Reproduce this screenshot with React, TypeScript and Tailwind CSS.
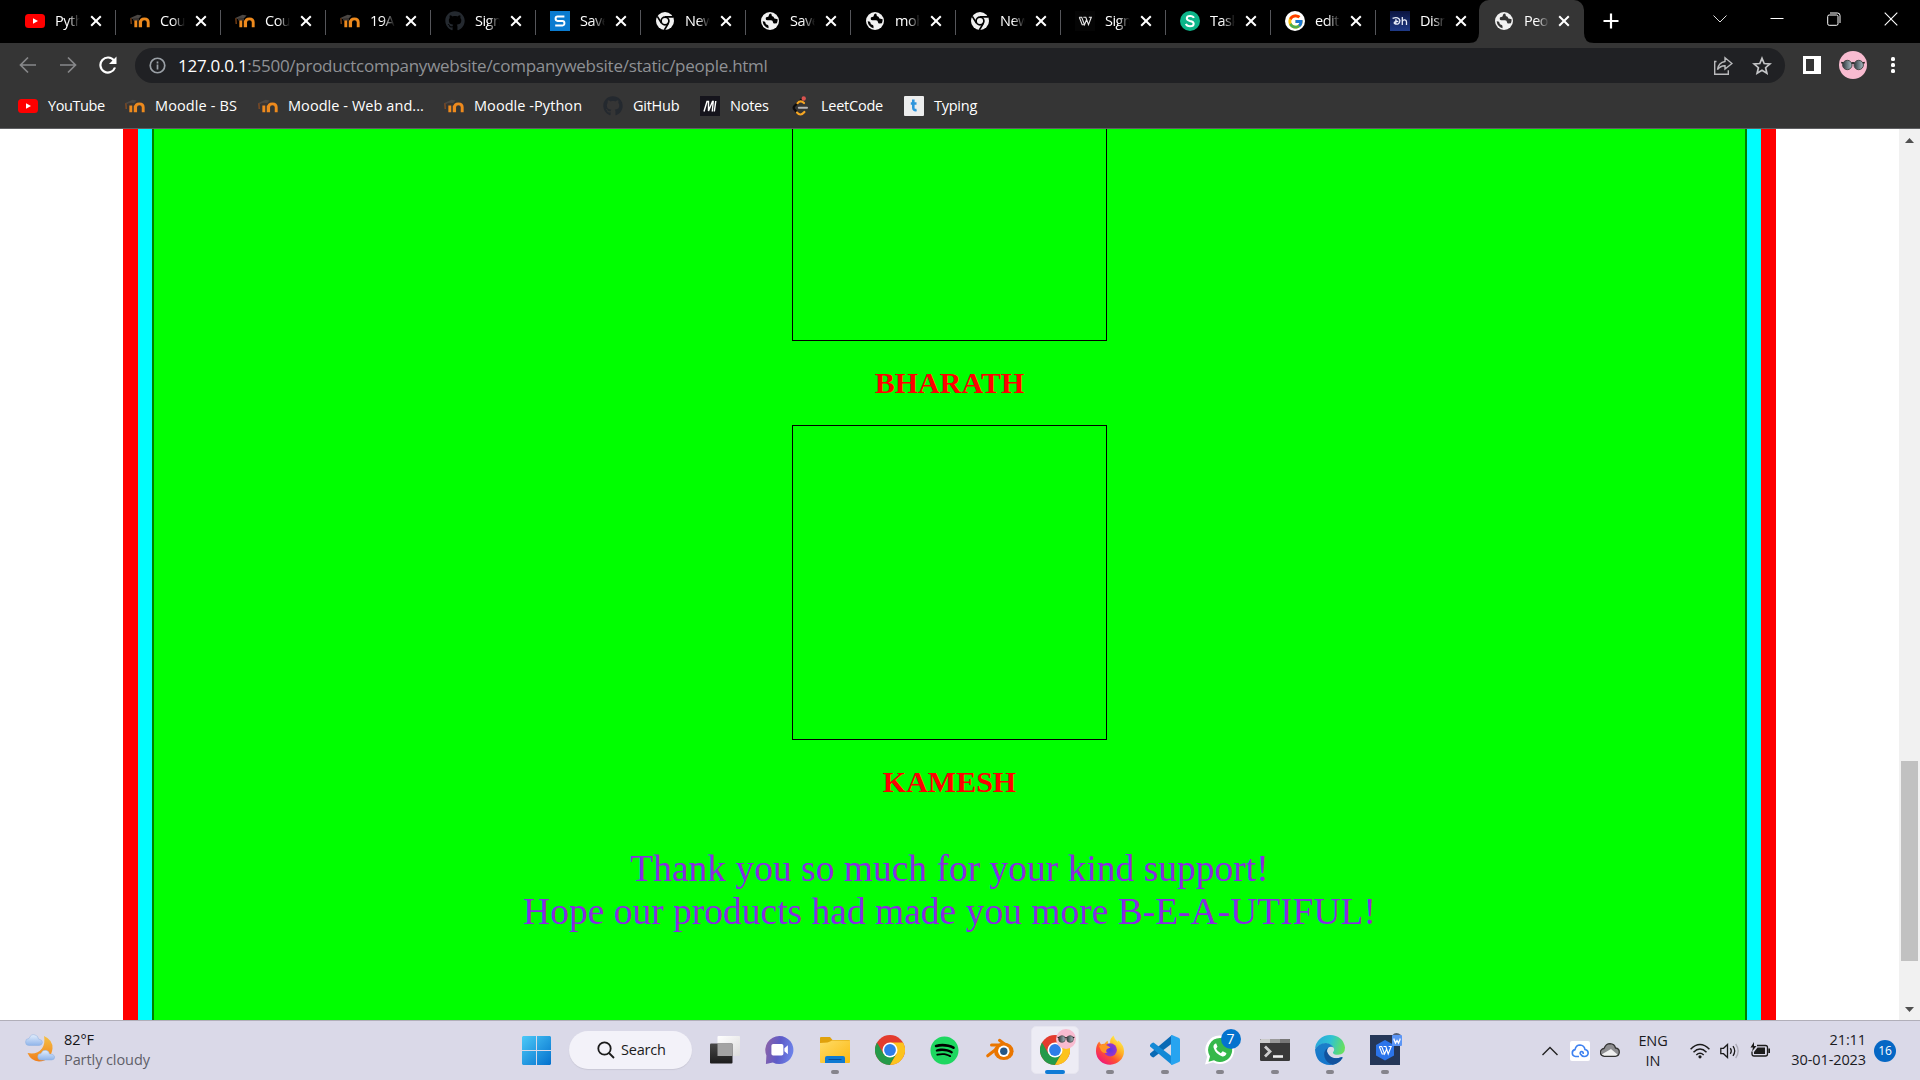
import React, { type ReactNode } from "react";
import { FaGithub, FaSpotify } from "react-icons/fa";
import { FcGoogle } from "react-icons/fc";

/* ---------- small favicons ---------- */

const YouTube = () => (
  <svg viewBox="0 0 20 20" className="size-5">
    <rect x="0" y="3" width="20" height="14" rx="3.5" fill="#f00" />
    <path d="M8 7.2v5.600l5-2.800z" fill="#fff" />
  </svg>
);

const Moodle = () => (
  <svg viewBox="0 0 20 20" className="size-5">
    <path d="M5.800 16.300V8.400M10.200 16.300V9.500M10.600 16.300v-5.100q0-3.300 3.800-3.300t3.800 3.300v5.100" fill="none" stroke="#ee8a1d" strokeWidth="2.900" />
    <path d="M.3 7 7.600 3.700l4 .9L9 7.300 2.600 8z" fill="#4b4744" />
    <path d="M3 7.400q3-1.200 6-.2v2.200H3z" fill="#3a3532" />
    <path d="M.9 7.200 1.200 13" stroke="#a3551b" strokeWidth="1" />
  </svg>
);

const GitHub = () => <FaGithub className="size-5 text-[#24292f]" />;

const SBlue = () => (
  <svg viewBox="0 0 20 20" className="size-5">
    <rect width="20" height="20" fill="#0a7bd0" />
    <path d="M14.400 5.400H7.600q-2 0-2 2.200t2 2.300h4.800q2 0 2 2.300t-2 2.200H5.200" fill="none" stroke="#fff" strokeWidth="2" />
  </svg>
);

const ChromeMono = () => (
  <svg viewBox="0 0 20 20" className="size-5">
    <circle cx="10" cy="10" r="9" fill="#f1f1f1" />
    <circle cx="10" cy="10" r="3.900" fill="none" stroke="#000" strokeWidth="1.700" />
    <path d="M10 5.900h8.200M6.400 12 2.300 5.300M13.500 12 9.400 19" stroke="#000" strokeWidth="1.600" />
  </svg>
);

const Globe = ({ hole = "#000" }: { hole?: string }) => (
  <svg viewBox="0 0 20 20" className="size-5">
    <circle cx="10" cy="10" r="9" fill="#f1f1f1" />
    <path d="M11 2.600q-2 .2-2.200 1.900-.1 1.500-1.800 1.500-1.500.1-1.300 2 .2 1.300 2 1.200h3.300q1.900.2 2 2 0 1.400 1.600 1.300l2.300-.3q.9-1.700.7-4l-2-.4q-1.600 0-1.700-1.200-.1-1.200-1.500-1.300-1-.2-.6-1.300zM2.700 10.200q.4 5.200 5.800 7v-2q-.1-1.200-1.300-1.400-1.600-.3-1.700-1.900-.1-1.300-1.200-1.500z" fill={hole} />
  </svg>
);

const WMono = () => (
  <svg viewBox="0 0 20 20" className="size-5" fill="none" stroke="#e8e8e8" strokeWidth="1.100">
    <rect width="20" height="20" fill="#050505" stroke="none" />
    <path d="M4.300 6.300h2.400l2.800 7.400 2-5M4.300 6.300l2.900 7.400h2.300M8.300 6.300h2.500l2.700 7.400 2.800-7.400h-2.500" />
  </svg>
);

const SGreen = () => (
  <svg viewBox="0 0 20 20" className="size-5">
    <circle cx="10" cy="10" r="10" fill="#0db58a" />
    <path d="M13.900 6.900q-.8-2-3.800-2-3.300 0-3.300 2.400 0 1.900 3.200 2.600 3.700.7 3.700 2.800 0 2.500-3.700 2.500-3.300 0-4.100-2.300" fill="none" stroke="#fff" strokeWidth="2" />
  </svg>
);

const Google = () => (
  <span className="flex size-5 items-center justify-center rounded-full bg-white">
    <FcGoogle className="size-[17px]" />
  </span>
);

const DisneyHotstar = () => (
  <svg viewBox="0 0 20 20" className="size-5">
    <defs>
      <linearGradient id="dh" x2="0" y2="1">
        <stop stopColor="#0b1440" />
        <stop offset="1" stopColor="#1f3a86" />
      </linearGradient>
    </defs>
    <rect width="20" height="20" fill="url(#dh)" />
    <path d="M2.600 7.300q6-2 7.300 2.200-.2 4-4.200 3.700-2-.7-1.300-2 1.400-1.200 4-.7M5.900 8.300v5M12.300 6v8M12.300 10.500q.6-1.900 2.600-1.600 1.600.3 1.600 2V14" fill="none" stroke="#e8ecf8" strokeWidth="1.300" />
  </svg>
);

const NotesM = () => (
  <svg viewBox="0 0 20 20" className="size-5">
    <rect width="20" height="20" fill="#15141c" />
    <path d="M4 15.500 7 5.500h1.500v9.500l4-9.500h.7l-.9 10M15.800 5l-1.500 10.500" fill="none" stroke="#fff" strokeWidth="1.400" />
  </svg>
);

const LeetCode = () => (
  <svg viewBox="0 0 20 20" className="size-5" fill="none" strokeLinecap="round">
    <path d="M11.500 2.500 3.500 10q-1.700 1.800 0 3.600L6.500 17" stroke="#0c0c0c" strokeWidth="2.200" />
    <path d="M6.500 7.200q3-3.500 6.500-.2M6 16.500q3.400 4.200 7.400-.5" stroke="#f5a623" strokeWidth="2.200" />
    <path d="M7.800 11.700h8.200" stroke="#b5b5b5" strokeWidth="2" />
    <circle cx="12.700" cy="2.500" r="2.200" fill="#d9534f" />
  </svg>
);

const TypingT = () => (
  <svg viewBox="0 0 20 20" className="size-5">
    <rect width="20" height="20" rx="1" fill="#eceded" />
    <path d="M9.300 3.500v8.300q0 2.800 3.300 2.200M6.800 7.500h5.700" fill="none" stroke="#2f95dc" strokeWidth="2.600" />
  </svg>
);

const Glasses = ({ className }: { className: string }) => (
  <svg viewBox="0 0 28 28" className={className}>
    <defs>
      <linearGradient id="lens">
        <stop stopColor="#30383d" />
        <stop offset="1" stopColor="#a9bcc4" />
      </linearGradient>
    </defs>
    <circle cx="14" cy="14" r="14" fill="#f8bbd0" />
    <circle cx="8.300" cy="14" r="4.700" fill="url(#lens)" stroke="#4a4a4a" />
    <circle cx="19.700" cy="14" r="4.700" fill="url(#lens)" stroke="#4a4a4a" />
    <path d="M2.200 11.500l2 .5M25.800 11.500l-2 .5M12.500 12.500q1.500-1.200 3 0" stroke="#222" strokeWidth="1.600" fill="none" />
  </svg>
);

const CloseX = () => (
  <svg viewBox="0 0 12 12" className="size-3 shrink-0" stroke="#fff" strokeWidth="2">
    <path d="M1.200 1.200l9.600 9.600M10.800 1.200 1.200 10.800" />
  </svg>
);

/* ---------- tab strip ---------- */

const tabs: { title: string; icon: ReactNode }[] = [
  { title: "Pyth", icon: <YouTube /> },
  { title: "Cour", icon: <Moodle /> },
  { title: "Cour", icon: <Moodle /> },
  { title: "19AI", icon: <Moodle /> },
  { title: "Sign", icon: <GitHub /> },
  { title: "Save", icon: <SBlue /> },
  { title: "New", icon: <ChromeMono /> },
  { title: "Save", icon: <Globe /> },
  { title: "moh", icon: <Globe /> },
  { title: "New", icon: <ChromeMono /> },
  { title: "Sign", icon: <WMono /> },
  { title: "Task", icon: <SGreen /> },
  { title: "editi", icon: <Google /> },
  { title: "Disn", icon: <DisneyHotstar /> },
];

const TabTitle = ({ children }: { children: ReactNode }) => (
  <span className="-mt-px ml-[10px] w-[25px] shrink-0 overflow-hidden whitespace-nowrap text-[14.500px] leading-5 tracking-[-0.500px] text-white [mask-image:linear-gradient(to_right,#000_50%,transparent)]">
    {children}
  </span>
);

const TabStrip = () => (
  <div className="flex h-[43px] bg-black pl-[11px]">
    {tabs.map((t, i) => (
      <div key={i} className="flex h-[42px] w-[105px] shrink-0 items-center pl-[14px]">
        {t.icon}
        <TabTitle>{t.title}</TabTitle>
        <span className="ml-[10px] flex">
          <CloseX />
        </span>
        <span className={i < 13 ? "mt-[2px] ml-auto h-[25px] w-px bg-[#55565a]" : "hidden"} />
      </div>
    ))}
    <div className="relative -ml-[2px] flex h-[43px] w-[105px] shrink-0 items-center rounded-t-[10px] bg-[#353535] pb-px pl-[15px]">
      <svg viewBox="0 0 10 10" className="absolute bottom-0 -left-[10px] size-[10px]">
        <path d="M10 0v10H0q10 0 10-10z" fill="#353535" />
      </svg>
      <svg viewBox="0 0 10 10" className="absolute -right-[10px] bottom-0 size-[10px]">
        <path d="M0 0v10h10Q0 10 0 0z" fill="#353535" />
      </svg>
      <Globe hole="#353535" />
      <TabTitle>Peop</TabTitle>
      <span className="ml-[9px] flex">
        <CloseX />
      </span>
    </div>
    <svg viewBox="0 0 16 16" className="mt-[13px] ml-[19px] size-4" stroke="#fff" strokeWidth="2.200">
      <path d="M8 .5v15M.5 8h15" />
    </svg>
    <div className="mr-[14px] ml-auto flex h-[37px] items-center text-white">
      <svg viewBox="0 0 14 14" className="size-[14px]" fill="none" stroke="#ddd">
        <path d="M.5 3.500 7 10l6.500-6.500" />
      </svg>
      <svg viewBox="0 0 14 14" className="ml-[43px] size-[14px]" fill="none" stroke="#fff">
        <path d="M.5 6.500h13" />
      </svg>
      <svg viewBox="0 0 14 14" className="ml-[43px] size-[14px]" fill="none" stroke="#fff">
        <rect x=".7" y="3" width="10.300" height="10.300" rx="1.500" />
        <path d="M3 1h7.500q2.500 0 2.500 2.500V11" />
      </svg>
      <svg viewBox="0 0 14 14" className="ml-[43px] size-[14px]" fill="none" stroke="#fff" strokeWidth="1.100">
        <path d="M.7.700l12.600 12.600M13.300.700.700 13.300" />
      </svg>
      <span className="w-[8px]" />
    </div>
  </div>
);

/* ---------- toolbar ---------- */

const Toolbar = () => (
  <div className="flex h-[45px] items-center bg-[#353535] pl-[19px]">
    <svg viewBox="0 0 18 18" className="-mt-px size-[18px]" fill="none" stroke="#87888a" strokeWidth="1.700">
      <path d="M17 9H1.800M9 1.500 1.500 9 9 16.500" />
    </svg>
    <svg viewBox="0 0 18 18" className="-mt-px ml-[22px] size-[18px]" fill="none" stroke="#87888a" strokeWidth="1.700">
      <path d="M1 9h15.200M9 1.500 16.500 9 9 16.500" />
    </svg>
    <svg viewBox="0 0 18 18" className="-mt-px ml-[22px] size-[18px]" fill="none" stroke="#fff" strokeWidth="2.200">
      <path d="M15 4.600A7.500 7.500 0 1 0 16 11.500" />
      <path d="M17.500.500v7.500H10z" fill="#fff" stroke="none" />
    </svg>
    <div className="ml-[18px] flex h-[35px] w-[1650px] items-center rounded-full bg-[#202124] pl-[14px]">
      <svg viewBox="0 0 18 18" className="size-[17px]" fill="none" stroke="#9aa0a6" strokeWidth="1.800">
        <circle cx="9" cy="9" r="7.700" />
        <path d="M9 8v5.200M9 4.800v2" />
      </svg>
      <span className="ml-[12px] text-[17px] leading-6 tracking-[-0.265px] whitespace-nowrap text-[#8f9195]">
        <span className="text-white">127.0.0.1</span>:5500/productcompanywebsite/companywebsite/static/people.html
      </span>
      <svg viewBox="0 0 20 20" className="ml-auto size-5" fill="none" stroke="#b9babc" strokeWidth="1.400">
        <path d="M3.500 5.500H1.700v12.800h13.600v-4" />
        <path d="M12 1.800 19 7.500 12 13V9.700q-4.500-.2-7.500 3.800Q5.500 6.500 12 5.500z" />
      </svg>
      <svg viewBox="0 0 20 20" className="mr-[13px] ml-[19px] size-5" fill="none" stroke="#c4c5c7" strokeWidth="1.700">
        <path d="M10 2.300l2.200 5.200 5.700.5-4.300 3.700 1.300 5.500-4.900-2.900-4.900 2.900 1.300-5.500L2.100 8l5.700-.5z" />
      </svg>
    </div>
    <svg viewBox="0 0 18 18" className="-mt-px ml-[18px] size-[18px]">
      <path d="M0 0h18v18H0zM3 3v12h8V3z" fill="#fff" fillRule="evenodd" />
    </svg>
    <Glasses className="-mt-px ml-[18px] size-7" />
    <svg viewBox="0 0 4 18" className="-mt-px ml-[24px] h-[18px] w-1" fill="#fff">
      <rect y="1" width="4" height="4" rx="1.500" />
      <rect y="7" width="4" height="4" rx="1.500" />
      <rect y="13" width="4" height="4" rx="1.500" />
    </svg>
  </div>
);

const Bookmark = ({ icon, className, children }: { icon: ReactNode; className: string; children: ReactNode }) => (
  <div className={"flex shrink-0 items-center whitespace-nowrap " + className}>
    {icon}
    <span className="ml-[10px]">{children}</span>
  </div>
);

const Bookmarks = () => (
  <div className="flex h-[41px] items-start border-b border-[#5f6063] bg-[#353535] pt-2 pl-[18px] text-[14.500px] leading-5 text-white">
    <Bookmark icon={<YouTube />} className="w-[107px] tracking-[-0.420px]">YouTube</Bookmark>
    <Bookmark icon={<Moodle />} className="w-[133px] tracking-[0.120px]">Moodle - BS</Bookmark>
    <Bookmark icon={<Moodle />} className="w-[186px] tracking-[0.060px]">Moodle - Web and...</Bookmark>
    <Bookmark icon={<Moodle />} className="w-[159px] tracking-[0.060px]">Moodle -Python</Bookmark>
    <Bookmark icon={<GitHub />} className="w-[97px] tracking-[-0.250px]">GitHub</Bookmark>
    <Bookmark icon={<NotesM />} className="w-[91px] tracking-[-0.250px]">Notes</Bookmark>
    <Bookmark icon={<LeetCode />} className="w-[113px] tracking-[-0.250px]">LeetCode</Bookmark>
    <Bookmark icon={<TypingT />} className="w-[80px] tracking-[-0.250px]">Typing</Bookmark>
  </div>
);

/* ---------- page ---------- */

const Page = () => (
  <div className="flex h-[891px] overflow-hidden bg-white">
    <div className="ml-[123px] w-[1653px] border-x-[15px] border-[red]">
      <div className="h-full border-x-[14px] border-[aqua]">
        <div className="flex h-full flex-col items-center border-x-2 border-[green] bg-[lime] font-['Liberation_Serif',serif]">
          <div className="h-[212px] w-[315px] border border-t-0 border-black" />
          <h2 className="mt-[25px] text-[30px] leading-[34px] font-bold text-[red]">BHARATH</h2>
          <div className="mt-[25px] h-[315px] w-[315px] border border-black" />
          <h2 className="mt-[25px] text-[30px] leading-[34px] font-bold text-[red]">KAMESH</h2>
          <p className="mt-[48px] text-center text-[37.500px] leading-[43px] text-[blueviolet]">
            Thank you so much for your kind support!
            <br />
            Hope our products had made you more B-E-A-UTIFUL!
          </p>
        </div>
      </div>
    </div>
    <div className="ml-auto flex w-[21px] flex-col items-center bg-[#f1f1f1]">
      <svg viewBox="0 0 9 5" className="mt-[9px] h-[5px] w-[9px]">
        <path d="M0 5 4.500 0 9 5z" fill="#505050" />
      </svg>
      <div className="mt-[618px] h-[200px] w-[17px] bg-[#c1c1c1]" />
      <svg viewBox="0 0 9 5" className="mt-auto mb-[8px] h-[5px] w-[9px]">
        <path d="M0 0 4.500 5 9 0z" fill="#505050" />
      </svg>
    </div>
  </div>
);

/* ---------- taskbar ---------- */

const Windows = () => (
  <svg viewBox="0 0 29 29" className="size-[29px]">
    <defs>
      <linearGradient id="win" x2="1" y2="1">
        <stop stopColor="#4cc9f8" />
        <stop offset="1" stopColor="#0370cd" />
      </linearGradient>
    </defs>
    <path d="M1 0h13v14H0V1zM15 0h13l1 1v13H15zM0 15h14v14H1l-1-1zM15 15h14v13l-1 1H15z" fill="url(#win)" />
  </svg>
);

const TaskView = () => (
  <svg viewBox="0 0 30 30" className="size-[30px]">
    <defs>
      <linearGradient id="tvd" x2="0" y2="1">
        <stop stopColor="#484848" />
        <stop offset="1" stopColor="#1c1c1c" />
      </linearGradient>
      <linearGradient id="tvl" x2="1" y2="1">
        <stop stopColor="#fff" />
        <stop offset="1" stopColor="#dcdcdc" />
      </linearGradient>
    </defs>
    <rect x="7.500" y="1" width="22.500" height="20" rx="1" fill="url(#tvl)" />
    <rect x="0" y="8.500" width="22.500" height="20" rx="1" fill="url(#tvd)" />
    <path d="M7.500 8.500h15V21h-15z" fill="#a3a3a3" />
  </svg>
);

const TeamsChat = () => (
  <svg viewBox="0.6 0 30 30" className="size-[30px]">
    <defs>
      <linearGradient id="chat" x1="0" y1=".3" x2="1" y2=".5">
        <stop stopColor="#8b62a8" />
        <stop offset=".5" stopColor="#5d5bc8" />
        <stop offset="1" stopColor="#6d83ea" />
      </linearGradient>
    </defs>
    <path d="M15 1a14 14 0 1 1-6.500 26.400L1.500 29 2 20.500A14 14 0 0 1 15 1z" fill="url(#chat)" />
    <rect x="7" y="9" width="12" height="11.500" rx="1.800" fill="#fff" />
    <path d="M20 13.200l3.500-3v9l-3.500-3z" fill="#fff" />
  </svg>
);

const Explorer = () => (
  <svg viewBox="0 0 30 30" className="size-[30px]">
    <defs>
      <linearGradient id="fold" x2="1" y2="1">
        <stop stopColor="#ffdb66" />
        <stop offset="1" stopColor="#fcb912" />
      </linearGradient>
    </defs>
    <path d="M0 3q0-1 1-1h9l2.500 3H29q1 0 1 1v4H0z" fill="#e0a10c" />
    <path d="M0 8q9 0 12-2.500h18V27q0 1-1 1H1q-1 0-1-1z" fill="url(#fold)" />
    <path d="M5 28v-5q0-2 2-2h16q2 0 2 2v5z" fill="#0f7ad2" />
    <path d="M8.500 24.500h13" stroke="#094c97" />
  </svg>
);

const Chrome = () => (
  <svg viewBox="0 0 30 30" className="size-[30px]">
    <circle cx="15" cy="15" r="15" fill="#e33b2e" />
    <path d="M2 7.500 8.500 18.800 21.500 18.800 15 30A15 15 0 0 1 2 7.500z" fill="#259a49" />
    <path d="M28 7.500H15L21.500 18.800 15 30A15 15 0 0 0 28 7.500z" fill="#fcc31e" />
    <circle cx="15" cy="15" r="7.500" fill="#fff" />
    <circle cx="15" cy="15" r="5.900" fill="#2f7de9" />
  </svg>
);

const Spotify = () => (
  <span className="flex size-[30px] items-center justify-center">
    <span className="flex size-[29px] items-center justify-center rounded-full bg-[radial-gradient(circle,#000_60%,transparent_62%)]">
      <FaSpotify className="size-[29px] text-[#1ed760]" />
    </span>
  </span>
);

const Blender = () => (
  <svg viewBox="0 0 30 30" className="size-[30px]">
    <path d="M2.700 20.800 14 12M6.500 10h9M14.500 5.300 24 12.500" stroke="#ea7600" strokeWidth="3" strokeLinecap="round" fill="none" />
    <path d="M6.500 9.500H18L12 17 3 21z" fill="none" />
    <ellipse cx="18.800" cy="16.300" rx="9.800" ry="8.800" fill="#ea7600" />
    <circle cx="18.800" cy="16.300" r="5.700" fill="#fff" />
    <circle cx="18.800" cy="16.300" r="3.700" fill="#265787" />
  </svg>
);

const Firefox = () => (
  <svg viewBox="0 0 30 30" className="size-[30px]">
    <defs>
      <linearGradient id="ff" x1=".85" y1=".1" x2=".2" y2=".95">
        <stop stopColor="#fff04a" />
        <stop offset=".35" stopColor="#ffae24" />
        <stop offset=".65" stopColor="#ff5130" />
        <stop offset="1" stopColor="#f0157c" />
      </linearGradient>
      <radialGradient id="ffb">
        <stop stopColor="#5f35e0" />
        <stop offset="1" stopColor="#9c35c9" />
      </radialGradient>
    </defs>
    <path d="M4.200 6.500 6 9.500q2-1 3.500-.8Q11 6.500 13 5.800q-.6 2 .8 3.600h1.700Q14 4 18.500.500q1 4 4 6.300l1-1.300q5.500 5 5.500 10.500A14 13.500 0 0 1 1 16.500Q.8 10.500 4.200 6.500z" fill="url(#ff)" />
    <circle cx="15.300" cy="14.800" r="6.600" fill="url(#ffb)" />
    <path d="M4 11q5-3 9.500.2l2 1.300-3.500 1.500q-2 2.500.5 3.500-4 1.500-6.500-1.800z" fill="#ff9526" />
  </svg>
);

const VsCode = () => (
  <svg viewBox="0 0 30 30" className="size-[30px]">
    <path d="M22 0v8.500L3.500 22.500 2 22 0 20v-1.500z" fill="#0a6ab5" />
    <path d="M22 30v-8.500L3.500 7.500 2 8 0 10v1.500z" fill="#1389d6" />
    <path d="M22 0l7 3q1 .5 1 1.500v21q0 1-1 1.500l-7 3-1-.8V.800z" fill="#27a4f0" />
  </svg>
);

const WhatsApp = () => (
  <div className="relative size-[30px]">
    <svg viewBox="0 0 30 30" className="size-[30px]">
      <path d="M15 .500a14.300 14.300 0 1 1-7 26.800L0 29.500l2.200-7.700A14.300 14.300 0 0 1 15 .500z" fill="#fff" />
      <path d="M15 3a12 12 0 1 1-6 22.300L3.500 26.800 5 21.400A12 12 0 0 1 15 3z" fill="#35b84a" />
      <path d="M10.500 8.500q-2.600 1.400-1.900 4.300 2 6.600 8.800 8.600 2.800.4 4-2.400l-.2-1-3.500-1.700-1.900 1.900q-3.300-1.500-4.700-4.500l1.400-1.900-1.300-3.200z" fill="#fff" />
    </svg>
    <span className="absolute -top-[6px] left-4 flex size-5 items-center justify-center rounded-full bg-[#0473ce] text-[14px] leading-none text-white">7</span>
  </div>
);

const Terminal = () => (
  <svg viewBox="0 0 30 30" className="size-[30px]">
    <rect y="4" width="30" height="22" rx="1.300" fill="#393939" />
    <path d="M1 4h9v4H0V5z" fill="#cbcbcb" />
    <path d="M10 4h10v4H10z" fill="#9a9a9a" />
    <path d="M20 4h9l1 1v3H20z" fill="#777" />
    <path d="M5 11.500l5 5-5 5" fill="none" stroke="#ccc" strokeWidth="2.800" />
    <path d="M13 21.500h10" stroke="#eee" strokeWidth="2.600" />
  </svg>
);

const Edge = () => (
  <svg viewBox="0 0 30 30" className="size-[30px]">
    <defs>
      <linearGradient id="edg" x1="0" y1=".3" x2="1" y2=".5">
        <stop stopColor="#2aa5dc" />
        <stop offset=".5" stopColor="#2fc2d3" />
        <stop offset="1" stopColor="#68e05c" />
      </linearGradient>
      <linearGradient id="edb" x2="0" y2="1">
        <stop stopColor="#1b7fc9" />
        <stop offset="1" stopColor="#1575cc" />
      </linearGradient>
    </defs>
    <path d="M0 14A15 15 0 0 1 15 0q13 .5 15 12.500 0 7-7 7.300-5.500-.2-5-2.500 1.500-1.500 1-3.500-1.500-4.500-7-5.300Q4 8.500 0 14z" fill="url(#edg)" />
    <path d="M0 14.500Q3.500 8 11 8q5.500.5 7.500 4.500-3-1.500-5.500.5-2 3 0 6.500 4 6 14 2.500 1 .3.500 1Q23 30 15 30 1 29.500 0 14.500z" fill="url(#edb)" />
    <path d="M13 12.800Q8 16 9.500 22q2 6 8 7.700 6.500-1 10-6.700 0-1-1-.8-8 2.800-12.500-2.200-3.500-4-1-7.200z" fill="#12529e" />
  </svg>
);

const Wps = () => (
  <div className="relative size-[30px]">
    <svg viewBox="0 0 30 30" className="size-[30px]">
      <rect width="30" height="30" fill="#253758" />
      <path d="M15 5l9 5v10.500l-9 5-9-5V10z" fill="#2b74ea" />
      <path d="M9.300 11.500h2.400l2.900 7.500 2-5M9.300 11.500l2.900 7.500h2.400M13.500 11.500h2.400l2.300 7.500 3-7.500h-2.600" fill="none" stroke="#fff" strokeWidth="1.100" />
    </svg>
    <svg viewBox="0 0 10 13" className="absolute -top-[2px] left-[22px] h-[13px] w-[10px]">
      <path d="M0 2.500Q4-2 9 2z" fill="#56617a" />
      <rect y="2" width="10" height="11" rx="1" fill="#5b95f5" />
      <path d="M2 5.500v1l1.500 3.500L5 7.500 6.500 10 8 6.500v-1" fill="none" stroke="#fff" strokeWidth="1.300" />
    </svg>
  </div>
);

const Slot = ({ children, mark, active }: { children: ReactNode; mark?: boolean; active?: boolean }) => (
  <div className="flex w-[55px] shrink-0 justify-center">
    <div
      className={
        active
          ? "flex h-12 w-12 flex-col items-center rounded-[5px] border border-[#e6e5ef] bg-[#edecf5] pt-[8px]"
          : "flex h-12 w-12 flex-col items-center pt-[9px]"
      }
    >
      {children}
      {mark && <span className="mt-[5px] h-1 w-2 rounded-full bg-[#85848c]" />}
      {active && <span className="mt-[5px] h-1 w-5 shrink-0 rounded-full bg-[#0f7bd6]" />}
    </div>
  </div>
);

const Weather = () => (
  <svg viewBox="0 0 30 30" className="size-[30px]">
    <defs>
      <linearGradient id="moon" x2="0" y2="1">
        <stop stopColor="#f5c044" />
        <stop offset="1" stopColor="#f07f1c" />
      </linearGradient>
      <linearGradient id="cloud" x2="0" y2="1">
        <stop stopColor="#e3eefc" />
        <stop offset="1" stopColor="#8fb4ea" />
      </linearGradient>
    </defs>
    <path d="M19 3q9 4 8.500 12.500Q26 28 14 28.500 6 28 2.500 20 12 22 17 15.500 20.500 10 19 3z" fill="url(#moon)" />
    <path d="M4 12.500A3.500 3.500 0 0 1 4 5.500Q6 .500 10 2q3 .5 3.500 4 4 .5 4 3.500-.5 3-3.500 3z" fill="url(#cloud)" stroke="#8fb0e0" strokeWidth=".5" />
    <path d="M16 27a3 3 0 0 1 0-6.500q1.500-4 5-3.200 3 .5 3.500 3.700 4.500-.5 5.300 3-.3 3-3.300 3z" fill="url(#cloud)" stroke="#8fb0e0" strokeWidth=".5" />
  </svg>
);

const Taskbar = () => (
  <div className="grid h-[60px] grid-cols-[509px_1fr_400px] border-t border-[#b1afb9] bg-[#dad9e8] font-['Open_Sans',sans-serif]">
    <div className="flex pl-[25px]">
      <div className="pt-[12px]">
        <Weather />
      </div>
      <div className="ml-[9px] pt-[9px] text-[14.500px] leading-5 tracking-[-0.080px]">
        <div className="text-[#151518]">82°F</div>
        <div className="text-[#606068]">Partly cloudy</div>
      </div>
    </div>
    <div className="flex pt-[5px]">
      <div className="flex w-[55px] justify-center pt-[10px]">
        <Windows />
      </div>
      <div className="mt-[5px] ml-[5px] flex h-[38px] w-[123px] items-center rounded-full bg-[#f3f2f9] pl-[28px] shadow-[0_1px_1px_#c9c8d6]">
        <svg viewBox="0 0 18 18" className="size-[18px]" fill="none" stroke="#1b1b1b" strokeWidth="1.800">
          <circle cx="7.500" cy="7.500" r="6.200" />
          <path d="M12 12l5 5" />
        </svg>
        <span className="ml-[6px] text-[14.500px] leading-5 tracking-[-0.200px] text-[#1b1b1b]">Search</span>
      </div>
      <div className="flex pl-[5px]">
        <Slot><TaskView /></Slot>
        <Slot><TeamsChat /></Slot>
        <Slot mark><Explorer /></Slot>
        <Slot><Chrome /></Slot>
        <Slot><Spotify /></Slot>
        <Slot><Blender /></Slot>
        <Slot active>
          <div className="relative size-[30px]">
            <Chrome />
            <Glasses className="absolute -top-[6px] left-4 size-5" />
          </div>
        </Slot>
        <Slot mark><Firefox /></Slot>
        <Slot mark><VsCode /></Slot>
        <Slot mark><WhatsApp /></Slot>
        <Slot mark><Terminal /></Slot>
        <Slot mark><Edge /></Slot>
        <Slot mark><Wps /></Slot>
      </div>
    </div>
    <div className="flex items-center pl-[22px] text-[14.500px] leading-5 tracking-[-0.100px] text-[#1b1b1f]">
      <svg viewBox="0 0 16 10" className="h-[10px] w-4" fill="none" stroke="#222" strokeWidth="1.400">
        <path d="M.5 9 8 1.500 15.500 9" />
      </svg>
      <span className="ml-[12px] flex size-5 items-center justify-center rounded-[2px] bg-white">
        <svg viewBox="0 0 18 14" className="h-[14px] w-[18px]" fill="none" stroke="#3f82f0" strokeWidth="1.600">
          <path d="M8 12.500H4.500A3.500 3.500 0 0 1 4 5.600Q5 1 9 1q4.200.2 5 4.500 3.200.5 3.200 3.700-.4 3.300-4 3.300-2.200 0-4-2.800-.3-2 1.500-2.200 1.800.2 1.500 2.500" />
        </svg>
      </span>
      <svg viewBox="0 0 20 14" className="-mt-px ml-[10px] h-[14px] w-5">
        <path d="M4.500 13.300A3.900 3.900 0 0 1 4 5.500Q6 .7 10 .7q4.500.3 5.500 4.300 3.800.3 3.800 4.200-.3 4-4 4.100z" fill="#8d8d90" />
        <path d="M1.500 11.500 11 6l6.500 5.500-2 1.800h-11z" fill="#f0f0f0" />
        <path d="M4.500 13.300A3.900 3.900 0 0 1 4 5.500Q6 .7 10 .7q4.500.3 5.500 4.300 3.800.3 3.800 4.200-.3 4-4 4.100z" fill="none" stroke="#333" strokeWidth="1.300" />
      </svg>
      <span className="ml-[18px] w-[30px] text-center">ENG<br />IN</span>
      <svg viewBox="0 0 20 16" className="ml-[22px] h-4 w-5" fill="none" stroke="#1b1b1b" strokeWidth="1.500">
        <path d="M.6 6.200q9.400-9.400 18.800 0M3.500 9.200q6.500-6.400 13 0M6.300 12q3.700-3.400 7.400 0" />
        <circle cx="10" cy="13.800" r="1.600" fill="#1b1b1b" stroke="none" />
      </svg>
      <svg viewBox="0 0 20 16" className="ml-[10px] h-4 w-5" fill="none" stroke="#1b1b1b" strokeWidth="1.300">
        <path d="M.8 5.300h2.700L7.500 1.500v13l-4-3.800H.8z" />
        <path d="M10.300 5.200q2 2.800 0 5.600M13 3.200q3.400 4.800 0 9.600" />
        <path d="M15.700 1q5 7 0 14" stroke="#aaa9b4" />
      </svg>
      <svg viewBox="0 0 20 16" className="-mt-[2px] ml-[10px] h-4 w-5">
        <path d="M7 3.500h8.500q2 0 2 2V12q0 2-2 2H4q-2 0-2-2V9.500" fill="none" stroke="#1b1b1b" strokeWidth="1.300" />
        <path d="M7.500 5.500H15v6.500H4V10zM18.300 6.500h1.700V11h-1.700zM4 0 .5 5.500H3L2 9.500 6.500 4H4z" fill="#1b1b1b" />
      </svg>
      <span className="-mt-[2px] ml-auto w-[80px] text-right whitespace-nowrap">21:11<br />30-01-2023</span>
      <span className="mr-[24px] ml-[8px] flex size-[22px] items-center justify-center rounded-full bg-[#0567c4] text-[12px] text-white">16</span>
    </div>
  </div>
);

export default function App() {
  return (
    <div className="h-[1080px] w-[1920px] overflow-hidden bg-white font-['Open_Sans',sans-serif]">
      <TabStrip />
      <Toolbar />
      <Bookmarks />
      <Page />
      <Taskbar />
    </div>
  );
}
